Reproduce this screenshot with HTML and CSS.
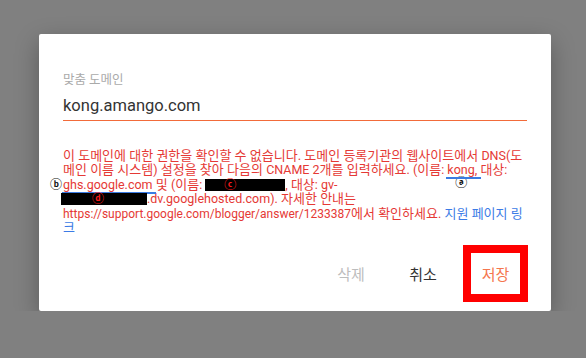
FILE: index.html
```html
<!DOCTYPE html>
<html lang="ko">
<head>
    <meta charset="UTF-8">
    <meta name="viewport" content="width=device-width, initial-scale=1.0">
    <title>맞춤 도메인</title>
    <link rel="stylesheet" href="styles.css">
</head>
<body>
    <!-- 맞춤 도메인 대화상자 -->
    <div class="dialog">
        <div class="field">
            <div class="field-label">맞춤 도메인</div>
            <div class="field-input">kong.amango.com</div>
        </div>
        <!-- 한글은 13px, 영문은 조금 작게 -->
        <p class="error">이 도메인에 대한 권한을 확인할 수 없습니다. 도메인 등록기관의 웹사이트에서 <span class="en">DNS(</span>도메인 이름 시스템<span class="en">)</span> 설정을 찾아 다음의 <span class="en">CNAME 2</span>개를 입력하세요<span class="en">. (</span>이름<span class="en">: <span class="mark mark-a">kong,<span class="note note-a">ⓐ</span></span></span> 대상<span class="en">: <span class="mark mark-b">ghs.google.com<span class="note note-b">ⓑ</span></span></span> 및 <span class="en">(</span>이름<span class="en">: <span class="redact redact-c"><span class="tag">ⓒ</span></span>, </span>대상<span class="en">: gv-<span class="nowrap"><span class="redact redact-d"><span class="tag">ⓓ</span></span>.dv.googlehosted.com).</span></span> 자세한 안내는 <span class="en url">https://support.google.com/blogger/answer/1233387</span>에서 확인하세요<span class="en">.</span> <a class="help-link" href="#">지원 페이지 링크</a></p>
        <div class="actions">
            <button class="btn btn-delete">삭제</button>
            <button class="btn btn-cancel">취소</button>
            <button class="btn btn-save">저장</button>
        </div>
    </div>
</body>
</html>
```

FILE: styles.css
```css
body {
    margin: 0;
    background: #808080;
    font-family: 'Roboto', 'Noto Sans CJK KR', sans-serif;
}
/* 대화상자 */
.dialog {
    width: 512px;
    height: 277px;
    box-sizing: border-box;
    margin: 34px 0 0 39px;
    padding: 38px 24px 0 24px;
    background: white;
    border-radius: 2px;
    box-shadow: 0 8px 24px rgba(0,0,0,0.3);
    display: flex;
    flex-direction: column;
}
.field-label {
    font-size: 12.5px;
    line-height: 15px;
    color: #aaa;
}
.field-input {
    margin-top: 8px;
    font-size: 16.5px;
    line-height: 22px;
    color: #333;
    padding-bottom: 3px;
    border-bottom: 1.5px solid #f26b3a;
}
/* 오류 메시지 */
.error {
    margin: 28px 0 0 0;
    font-size: 13px;
    line-height: 14.4px;
    color: #e53935;
}
.en {
    font-size: 12.5px;
}
.url {
    font-size: 12px;
}
.mark {
    position: relative;
}
.mark::after {
    content: '';
    position: absolute;
    height: 2px;
    background: #3a7be2;
}
.mark-a::after {
    left: -1px;
    right: -4px;
    bottom: -2px;
}
.mark-b::after {
    left: -1px;
    right: -3px;
    bottom: -2px;
}
.note {
    position: absolute;
    font-size: 12px;
    line-height: 12px;
    font-weight: bold;
    color: #111;
}
.note-a {
    left: 8px;
    top: 15px;
}
.note-b {
    left: -13px;
    top: 2px;
}
.redact {
    display: inline-block;
    height: 12px;
    background: #000;
    vertical-align: -2px;
    position: relative;
}
.redact-c {
    width: 80px;
}
.redact-d {
    width: 86px;
    margin-left: -2px;
}
.tag {
    position: absolute;
    top: 0;
    font-size: 12px;
    line-height: 12px;
    font-weight: bold;
    color: #ff1a1a;
}
.redact-c .tag {
    left: 19px;
}
.redact-d .tag {
    left: 31px;
}
.nowrap {
    white-space: nowrap;
}
.help-link {
    color: #3b7be6;
    text-decoration: none;
}
/* 버튼 */
.actions {
    margin-top: auto;
    margin-bottom: 9px;
    display: flex;
    justify-content: flex-end;
    align-items: center;
    gap: 8px;
    margin-right: -1px;
}
.btn {
    width: 64px;
    height: 57px;
    border: none;
    background: none;
    font-family: 'Roboto', 'Noto Sans CJK KR', sans-serif;
    font-size: 15px;
    padding: 0;
    cursor: pointer;
}
.btn-delete {
    color: #bdbdbd;
}
.btn-cancel {
    color: #333;
}
.btn-save {
    width: 65px;
    box-sizing: border-box;
    border: 8px solid #ff0000;
    color: #f5764e;
}
```
